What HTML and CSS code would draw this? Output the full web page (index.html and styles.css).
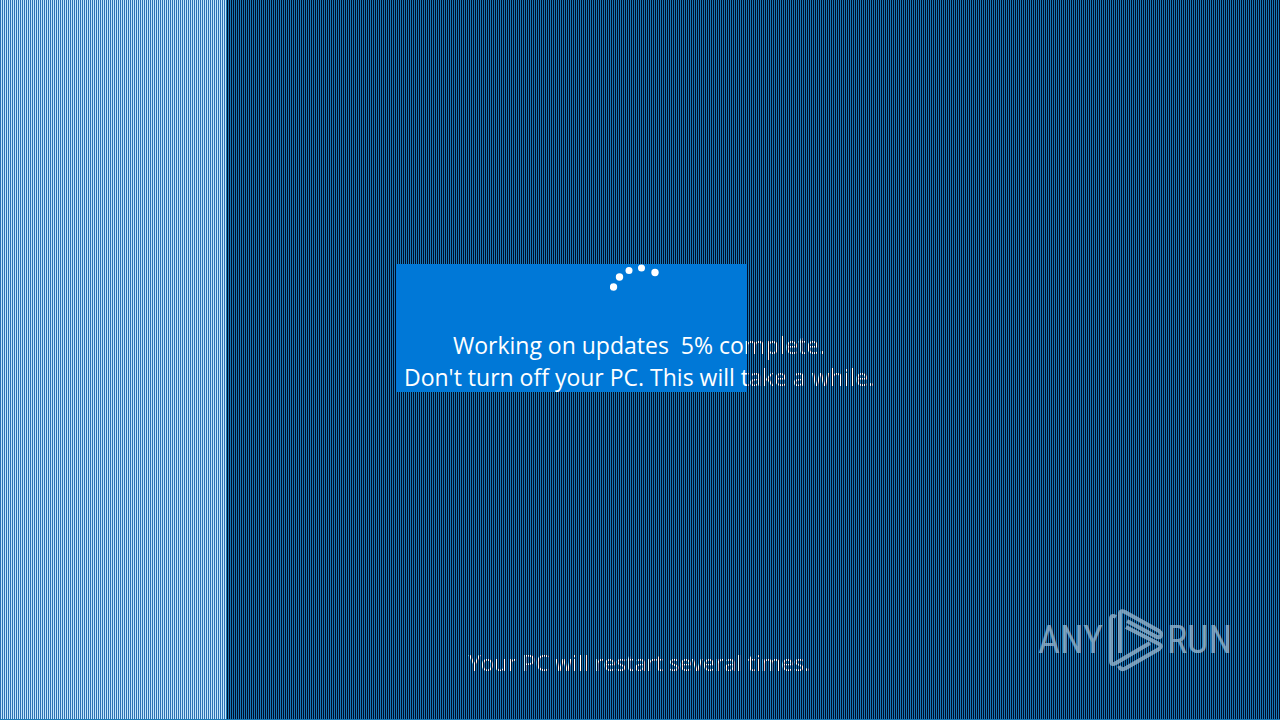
FILE: index.html
```
<!DOCTYPE html>
<html lang="en">
<head>
<meta charset="utf-8">
<title>Working on updates</title>
<link rel="stylesheet" href="styles.css">
</head>
<body>
<main class="screen">
  <div class="panel"></div>
  <section class="status">
    <svg class="spinner" viewBox="0 0 60 60" aria-hidden="true">
      <circle cx="3.5" cy="23" r="3.7"/><circle cx="9.5" cy="13" r="3.7"/><circle cx="19" cy="6.5" r="3.5"/><circle cx="31.5" cy="4" r="3.5"/><circle cx="45" cy="8.5" r="3.7"/>
    </svg>
    <p class="message">Working on updates&nbsp; 5% complete.<br>Don't turn off your PC. This will take a while.</p>
  </section>
  <p class="message footer">Your PC will restart several times.</p>
  <div class="stripes"></div>
  <div class="side-band"></div>
  <div class="watermark">
    <span class="brand">ANY</span>
    <svg class="mark" viewBox="0 0 56 64" aria-hidden="true">
      <path d="M13 45V5Q14 2 18 4L52 23Q56 26 53 29Q51 30 48 28L20 13"/>
      <path d="M9 9Q4 6 4 11V53Q4 58 9 55L43 35"/>
      <path d="M19 19L52 36Q56 38 52 41L19 60Q14 63 12 58"/>
    </svg>
    <span class="brand">RUN</span>
  </div>
</main>
</body>
</html>
```
FILE: styles.css
```
body {
  margin: 0;
  background: #0078d7;
  font-family: "Open Sans", "Noto Sans", sans-serif;
}
.screen {
  position: relative;
  min-height: 100vh;
  display: flex;
  flex-direction: column;
  justify-content: space-between;
  overflow: hidden;
  background: #1878b4;
}
.side-band {
  position: absolute;
  inset: 0 auto 1px 0;
  width: 226px;
  background-image: linear-gradient(90deg, #2c70b4 50%, #c0e6fc 50%);
  background-size: 2px 2px;
}
.panel {
  position: absolute;
  left: 396px;
  top: 264px;
  width: 351px;
  height: 128px;
  background: #0078d7;
}
.status {
  position: relative;
  padding-top: 264px;
}
.spinner {
  display: block;
  width: 60px;
  height: 60px;
  margin: 0 auto;
  fill: #fff;
}
.message {
  position: relative;
  margin: 5px 2px 0 0;
  color: #fff;
  font-size: 23px;
  line-height: 32px;
  text-align: center;
}
.footer {
  margin: 0 2px 42px 0;
  font-size: 22px;
}
.stripes {
  position: absolute;
  inset: 0 0 1px 0;
  background-image: linear-gradient(90deg, transparent 50%, #000c28 50%);
  background-size: 2px 2px;
  clip-path: polygon(0 0, 100% 0, 100% 100%, 0 100%, 0 392px, 747px 392px, 747px 264px, 396px 264px, 396px 392px, 0 392px);
}
.watermark {
  position: absolute;
  right: 48px;
  bottom: 48px;
  display: flex;
  align-items: center;
  gap: 4px;
  color: #94b4cc;
  opacity: 0.8;
}
.brand {
  font-family: "Roboto Condensed", "Open Sans Condensed", "Liberation Sans Narrow", "Roboto", sans-serif;
  font-size: 38px;
  line-height: 64px;
  font-weight: 400;
}
.mark {
  width: 56px;
  height: 64px;
  fill: none;
  stroke: currentColor;
  stroke-width: 4;
}
```
